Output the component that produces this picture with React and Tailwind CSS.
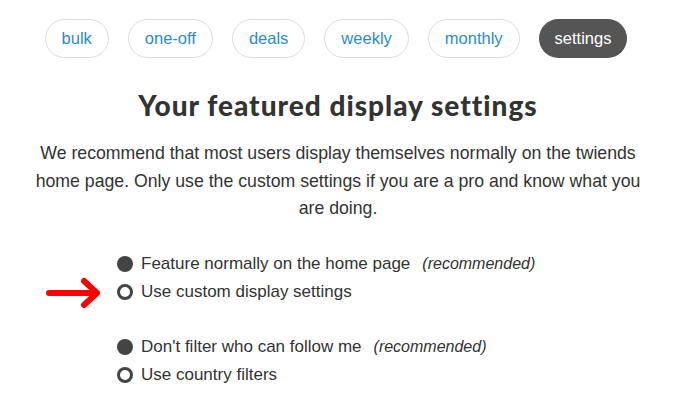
import React from 'react';

const TABS = ['bulk', 'one-off', 'deals', 'weekly', 'monthly', 'settings'];

const Radio = ({ checked }) =>
  checked ? (
    <span className="w-4 h-4 rounded-full bg-[#444] shrink-0" />
  ) : (
    <span className="w-4 h-4 rounded-full border-[3px] border-[#444] bg-white shrink-0" />
  );

const Option = ({ checked, label, note, arrow }) => (
  <div className="relative flex items-center h-7">
    {arrow && (
      <svg className="absolute left-[-72px] top-[-2px]" width="58" height="34" viewBox="0 0 58 34">
        <path d="M4 17 H50 M39 5 L52 17 L39 29" fill="none" stroke="#ff0000" strokeWidth="6" strokeLinecap="round" strokeLinejoin="round" />
      </svg>
    )}
    <Radio checked={checked} />
    <span className="ml-2 text-[17px] text-[#333]">{label}</span>
    {note && <span className="ml-3 text-[16px] italic text-[#333]">{note}</span>}
  </div>
);

export default function App() {
  return (
    <div className="w-[676px] h-[399px] bg-white overflow-hidden font-['Liberation_Sans',Arial,sans-serif]">
      <div className="flex justify-center gap-[19px] pt-[19px] pr-[4px]">
        {TABS.map((t) => (
          <div
            key={t}
            className={
              t === 'settings'
                ? 'h-[39px] px-4 rounded-full flex items-center text-[16.5px] bg-[#555] text-white'
                : 'h-[39px] px-4 rounded-full flex items-center text-[16.5px] border border-[#ddd] text-[#2b8ccc] bg-white'
            }
          >
            {t}
          </div>
        ))}
      </div>

      <h1 className="mt-[30px] text-center text-[28px] leading-[34px] font-black text-[#333] font-['Lato',sans-serif] tracking-[1px]">
        Your featured display settings
      </h1>

      <p className="mt-[18px] mx-auto w-[620px] text-center text-[17.7px] leading-[27.5px] text-[#333]">
        We recommend that most users display themselves normally on the twiends home page. Only use the custom settings if you are a pro and know what you are doing.
      </p>

      <div className="mt-[27px] pl-[117px]">
        <Option checked label="Feature normally on the home page" note="(recommended)" />
        <Option label="Use custom display settings" arrow />
        <div className="h-[27px]" />
        <Option checked label="Don't filter who can follow me" note="(recommended)" />
        <Option label="Use country filters" />
      </div>
    </div>
  );
}
